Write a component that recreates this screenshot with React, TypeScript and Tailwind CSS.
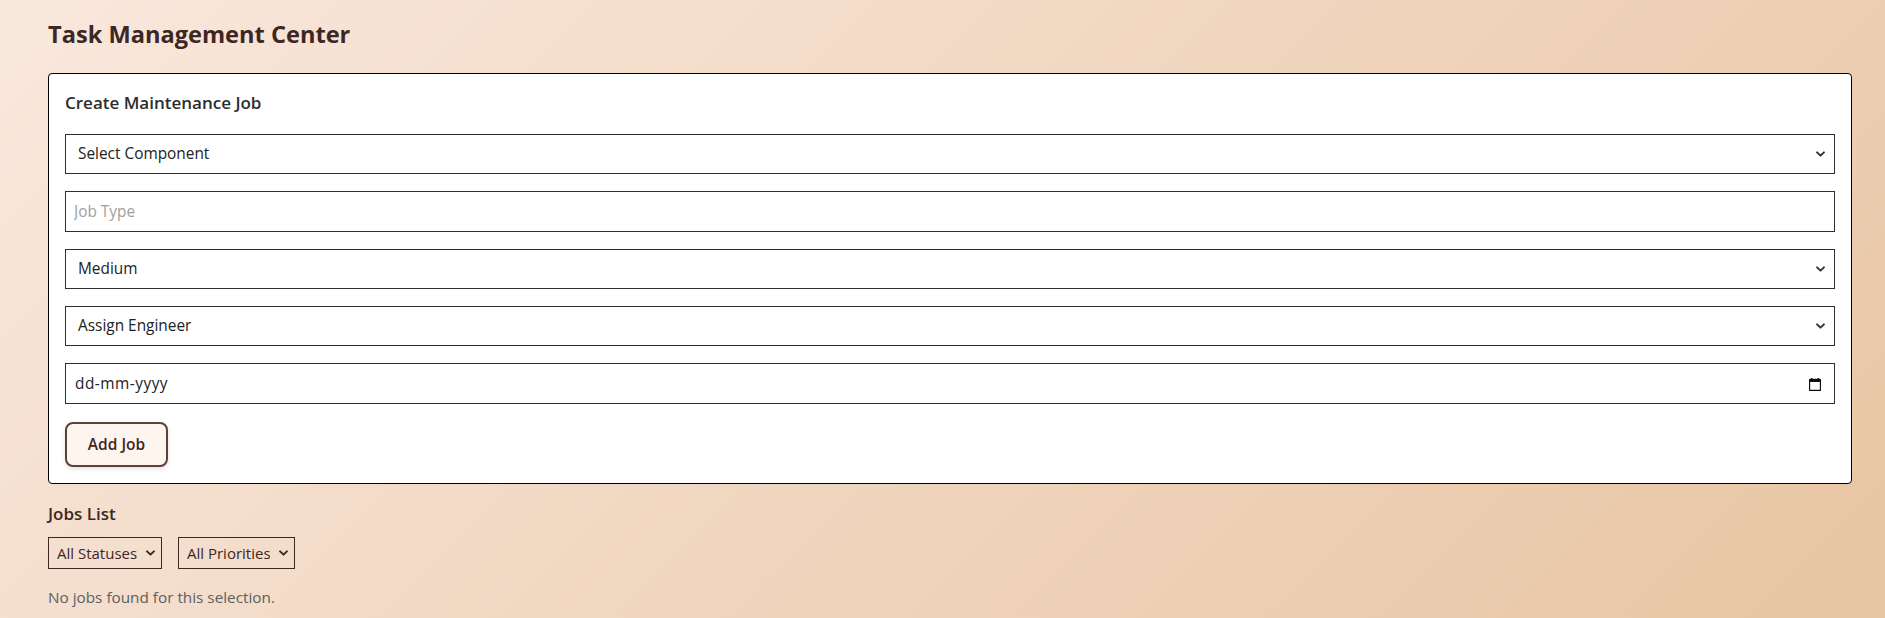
import { useState } from 'react'

const Chevron = ({ className }: { className?: string }) => (
  <svg
    viewBox="0 0 10 6"
    className={className}
    fill="none"
    stroke="currentColor"
    strokeWidth={2.2}
    strokeLinecap="round"
    strokeLinejoin="round"
  >
    <path d="M1.2 1.2l3.8 3.6 3.8-3.6" />
  </svg>
)

const CalendarIcon = () => (
  <svg viewBox="0 0 12 14" className="w-[12px] h-[14px]" fill="none">
    <rect x="0.5" y="2.5" width="11" height="11" rx="0.5" stroke="#111" strokeWidth={1.3} />
    <rect x="0.5" y="2.5" width="11" height="2.5" fill="#111" />
    <rect x="2" y="1" width="1.4" height="2" fill="#111" />
    <rect x="8.6" y="1" width="1.4" height="2" fill="#111" />
  </svg>
)

type SelectProps = {
  value: string
  options: string[]
  onChange: (v: string) => void
}

const FormSelect = ({ value, options, onChange }: SelectProps) => (
  <div className="relative w-full">
    <select
      value={value}
      onChange={(e) => onChange(e.target.value)}
      className="appearance-none w-full h-[40px] bg-white border border-[#2e2e2e] pl-[12px] pr-8 text-[15.4px] text-[#222] outline-none"
    >
      {options.map((o) => (
        <option key={o}>{o}</option>
      ))}
    </select>
    <Chevron className="absolute right-[10px] top-1/2 -translate-y-1/2 w-[9px] h-[6px] text-[#333] pointer-events-none" />
  </div>
)

const FilterSelect = ({
  value,
  options,
  onChange,
  width,
}: SelectProps & { width: string }) => (
  <div className={`relative ${width}`}>
    <select
      value={value}
      onChange={(e) => onChange(e.target.value)}
      className="appearance-none w-full h-[32px] bg-transparent border border-[#3e2723] pl-[8px] pr-6 text-[15px] text-[#3e2723] outline-none"
    >
      {options.map((o) => (
        <option key={o}>{o}</option>
      ))}
    </select>
    <Chevron className="absolute right-[7px] top-1/2 -translate-y-1/2 w-[9px] h-[6px] text-[#3e2723] pointer-events-none" />
  </div>
)

const App = () => {
  const [component, setComponent] = useState('Select Component')
  const [jobType, setJobType] = useState('')
  const [priority, setPriority] = useState('Medium')
  const [engineer, setEngineer] = useState('Assign Engineer')
  const [date, setDate] = useState('')
  const [status, setStatus] = useState('All Statuses')
  const [prio, setPrio] = useState('All Priorities')

  return (
    <div
      className="min-h-screen bg-[linear-gradient(135deg,#f9e8dd_0%,#e8c5a3_100%)] pl-12 pr-[33px] pt-[18px]"
      style={{ fontFamily: '"Open Sans", "Noto Sans", sans-serif' }}
    >
      <h1 className="text-[23.6px] leading-[32px] font-bold text-[#3e2723]">
        Task Management Center
      </h1>

      <div className="mt-[23px] bg-white border border-black rounded-[4px] p-4">
        <h2 className="text-[17px] leading-[26px] font-semibold text-[#2d2d2d] mb-[18px]">
          Create Maintenance Job
        </h2>
        <div className="flex flex-col gap-[17px]">
          <FormSelect
            value={component}
            onChange={setComponent}
            options={['Select Component', 'Engine', 'Landing Gear', 'Avionics']}
          />
          <input
            value={jobType}
            onChange={(e) => setJobType(e.target.value)}
            placeholder="Job Type"
            className="w-full h-[41px] border border-[#2e2e2e] px-[8px] text-[15.4px] text-[#222] placeholder:text-[#a0a0a0] outline-none"
          />
          <FormSelect
            value={priority}
            onChange={setPriority}
            options={['Low', 'Medium', 'High', 'Critical']}
          />
          <FormSelect
            value={engineer}
            onChange={setEngineer}
            options={['Assign Engineer', 'A. Patel', 'J. Moreno', 'K. Osei']}
          />
          <div className="relative w-full">
            <input
              value={date}
              onChange={(e) => setDate(e.target.value)}
              placeholder="dd-mm-yyyy"
              className="w-full h-[41px] border border-[#2e2e2e] pl-[9px] pr-10 text-[15.4px] tracking-[0.5px] text-[#222] placeholder:text-[#222] outline-none"
            />
            <div className="absolute right-[14px] top-1/2 -translate-y-1/2 flex pointer-events-none">
              <CalendarIcon />
            </div>
          </div>
        </div>
        <button className="mt-[18px] w-[103px] h-[45px] border-2 border-[#5d4037] rounded-[8px] bg-[#fff5ef] shadow-[0_2px_4px_rgba(0,0,0,0.12)] text-[15.5px] font-semibold text-[#3e2723]">
          Add Job
        </button>
      </div>

      <h3 className="mt-[18px] text-[17px] leading-[24px] font-semibold text-[#3e2723] mb-[11px]">
        Jobs List
      </h3>
      <div className="flex gap-4">
        <FilterSelect
          value={status}
          onChange={setStatus}
          width="w-[114px]"
          options={['All Statuses', 'Pending', 'In Progress', 'Completed']}
        />
        <FilterSelect
          value={prio}
          onChange={setPrio}
          width="w-[117px]"
          options={['All Priorities', 'Low', 'Medium', 'High', 'Critical']}
        />
      </div>
      <p className="mt-[17px] text-[15.3px] leading-[22px] text-[#5b6066]">
        No jobs found for this selection.
      </p>
    </div>
  )
}

export default App
